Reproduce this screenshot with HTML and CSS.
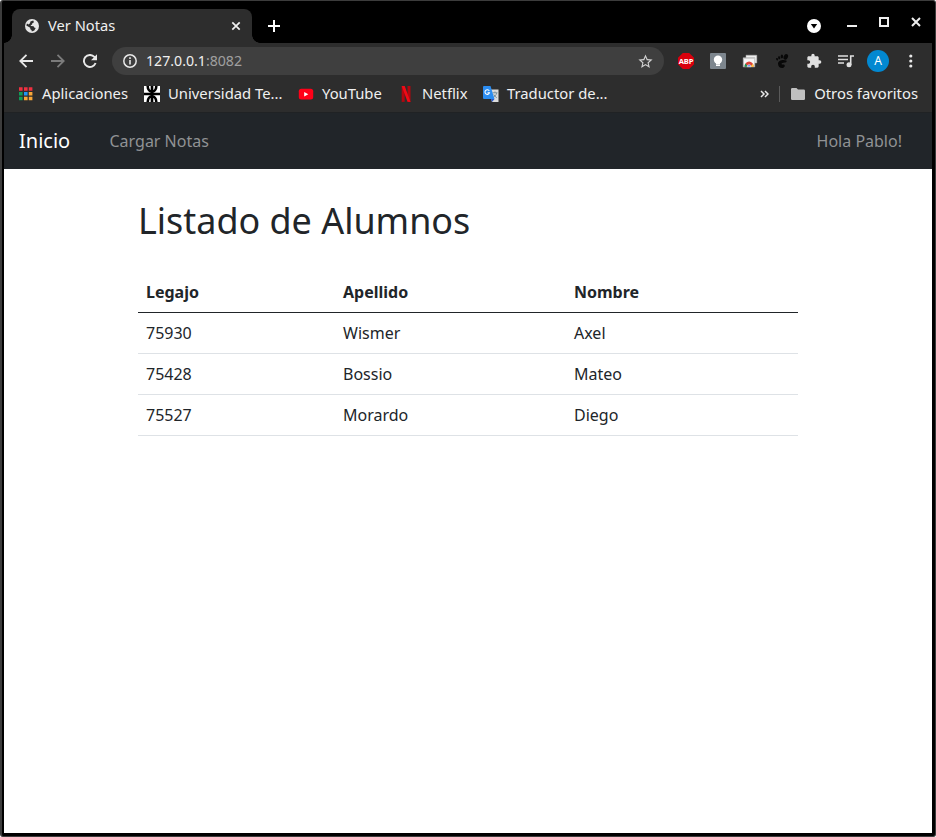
FILE: index.html
```html
<!DOCTYPE html>
<html lang="es">
<head>
<meta charset="utf-8">
<title>Ver Notas</title>
<link rel="stylesheet" href="styles.css">
</head>
<body>
<div class="window">
  <div class="tabstrip">
    <div class="tab">
      <svg class="globe" width="14" height="14" viewBox="0 0 14 14"><circle cx="7" cy="7" r="7" fill="#e6e6e6"/><path d="M8.200 1.500 9 3.200 7.300 4.300 7.100 5.500 5.600 6.200 6 7.100 8.600 7.300 9.200 8.600 10.700 9 9.300 11.500 6.800 12.600 6.500 11 5.300 10.200 5.200 8.700 1.300 6.600 2 4.400 3.500 5.500 5 4.200 5.400 2.600z" fill="#2d2d2d"/></svg>
      <span class="tab-title">Ver Notas</span>
      <svg width="10" height="10" viewBox="0 0 10 10"><path d="M1.3 1.3 8.7 8.7M8.7 1.3 1.3 8.7" stroke="#eee" stroke-width="1.7"/></svg>
    </div>
    <svg class="newtab" width="12" height="12" viewBox="0 0 12 12"><path d="M6 0v12M0 6h12" stroke="#fff" stroke-width="2"/></svg>
    <div class="controls">
      <svg class="search" width="14" height="14" viewBox="0 0 14 14"><circle cx="7" cy="7" r="7" fill="#fff"/><path d="M3.800 5h6.400L7 9.400z" fill="#000"/></svg>
      <svg class="min" width="10" height="10" viewBox="0 0 10 10"><path d="M0 9h10" stroke="#eee" stroke-width="2"/></svg>
      <svg class="max" width="10" height="10" viewBox="0 0 10 10"><path d="M1 1h8v8H1z" fill="none" stroke="#eee" stroke-width="2"/></svg>
      <svg class="close" width="10" height="10" viewBox="0 0 10 10"><path d="M1 1 9 9M9 1 1 9" stroke="#eee" stroke-width="2"/></svg>
    </div>
  </div>

  <div class="toolbar">
    <div class="cell"><svg width="14" height="14" viewBox="0 0 14 14"><path d="M14 7H1.5M7.5.8 1.3 7l6.2 6.2" fill="none" stroke="#e8e8e8" stroke-width="1.8"/></svg></div>
    <div class="cell"><svg width="14" height="14" viewBox="0 0 14 14"><path d="M0 7h12.5M6.5.8 12.7 7l-6.2 6.2" fill="none" stroke="#7b7b7b" stroke-width="1.8"/></svg></div>
    <div class="cell"><svg width="14" height="14" viewBox="0 0 14 14"><path d="M12.6 9A6 6 0 1 1 11.4 2.9L12.8 4.4" fill="none" stroke="#e8e8e8" stroke-width="1.9"/><path d="M14 .2V6.2H8z" fill="#e8e8e8"/></svg></div>
    <div class="omnibox">
      <svg width="14" height="14" viewBox="0 0 14 14"><circle cx="7" cy="7" r="6.2" fill="none" stroke="#e8e8e8" stroke-width="1.5"/><path d="M7 6v4.6M7 3.3v1.6" stroke="#e8e8e8" stroke-width="1.6"/></svg>
      <span class="url">127.0.0.1<span class="port">:8082</span></span>
      <svg width="17" height="17" viewBox="0 0 24 24"><path d="M22 9.24l-7.19-.62L12 2 9.19 8.63 2 9.24l5.46 4.73L5.82 21 12 17.27 18.18 21l-1.63-7.03L22 9.24zM12 15.4l-3.76 2.27 1-4.28-3.32-2.88 4.38-.38L12 6.1l1.71 4.04 4.38.38-3.32 2.88 1 4.28L12 15.4z" fill="#d0d0d0"/></svg>
    </div>
    <div class="extensions">
      <div class="cell"><div class="abp">ABP</div></div>
      <div class="cell"><svg width="16" height="16" viewBox="0 0 16 16"><rect width="16" height="16" rx="1" fill="#7d868e"/><circle cx="8" cy="6.800" r="4.200" fill="#fff"/><path d="M6 10h4v3H6z" fill="#fff"/><path d="M6 11.500h4" stroke="#b5babf" stroke-width=".6"/></svg></div>
      <div class="cell"><svg width="16" height="16" viewBox="0 0 16 16"><path d="M4 2.200H14.800V10H4z" fill="#eee" stroke="#aaa" stroke-width=".5"/><path d="M1.200 4.700H12.800V14H1.200z" fill="#f7f7f7" stroke="#999" stroke-width=".6"/><path d="M1.500 5.600h11" stroke="#c9c9c9"/><path d="M2.500 13.700a4.600 5.200 0 0 1 9.200 0z" fill="#db4437"/><path d="M2.500 13.700a4.600 5.200 0 0 1 1-3.200l2.500 3.200z" fill="#0f9d58"/><path d="M11.700 13.700a4.600 5.200 0 0 0-.8-2.900l-2.400 2.900z" fill="#ffcd40"/><path d="M5.200 13.700a1.900 2 0 0 1 3.800 0z" fill="#4285f4" stroke="#fff" stroke-width=".6"/></svg></div>
      <div class="cell"><svg width="14" height="16" viewBox="0 0 14 16"><g fill="#080808"><ellipse cx="10.800" cy="3.800" rx="2.100" ry="2.900" transform="rotate(25 10.800 3.800)"/><ellipse cx="6.900" cy="3.500" rx="1.200" ry="1.900"/><ellipse cx="4.200" cy="4.700" rx="1.100" ry="1.500" transform="rotate(-15 4.200 4.700)"/><ellipse cx="2.100" cy="6.200" rx="1" ry="1.300" transform="rotate(-25 2.100 6.200)"/><path d="M11.300 7.500C8 6 2.800 7.600 3 10.700 3.100 13.500 5.300 15.400 7.700 15c2.200-.4 2.900-3 1-3.500-1-.2-1.400.2-2-.2-.5-.6.400-1.300 1.600-1.500C10 9.600 12.600 9.200 11.300 7.500z"/></g></svg></div>
      <div class="cell"><svg width="16" height="16" viewBox="0 0 24 24"><path d="M20.5 11H19V7c0-1.1-.9-2-2-2h-4V3.500a2.500 2.500 0 0 0-5 0V5H4c-1.100 0-1.990.9-1.990 2v3.800H3.500c1.490 0 2.700 1.210 2.700 2.700s-1.210 2.700-2.700 2.700H2V20c0 1.100.9 2 2 2h3.800v-1.500c0-1.490 1.210-2.700 2.700-2.700s2.700 1.210 2.700 2.700V22H17c1.100 0 2-.9 2-2v-4h1.500a2.500 2.500 0 0 0 0-5z" fill="#e0e0e0"/></svg></div>
      <div class="cell"><svg width="16" height="14" viewBox="0 0 16 14"><path d="M0 2h10M0 5.500h10M0 9h6M12.700 11V2H16" fill="none" stroke="#e0e0e0" stroke-width="1.600"/><circle cx="11" cy="10.800" r="2.500" fill="#e0e0e0"/></svg></div>
      <div class="cell"><div class="avatar">A</div></div>
      <div class="cell"><svg width="5" height="14" viewBox="0 0 5 14"><g fill="#e8e8e8"><circle cx="2.800" cy="2" r="1.600"/><circle cx="2.800" cy="7" r="1.600"/><circle cx="2.800" cy="12" r="1.600"/></g></svg></div>
    </div>
  </div>

  <div class="bookmarks">
    <div class="bm apps"><svg width="16" height="16" viewBox="0 0 16 16"><path d="M1 1.300h3.600v3.400H1zM6 1.300h3.600v3.400H6zM10.800 1.300h3.600v3.400h-3.600z" fill="#f03040"/><path d="M1 6h3.600v3.400H1zM1 10.800h3.600v3.400H1z" fill="#0f9d58"/><path d="M6 6h3.600v3.400H6z" fill="#2196f3"/><path d="M10.800 6h3.600v3.400h-3.600zM6 10.800h3.600v3.400H6zM10.800 10.800h3.600v3.400h-3.600z" fill="#f9a737"/></svg><span>Aplicaciones</span></div>
    <div class="bm utn"><svg width="16" height="16" viewBox="0 0 16 16"><path d="M0 0h16v16H0z" fill="#fff"/><path d="M8 0v16M0 8h16" stroke="#000" stroke-width="2.600"/><path d="M3.700 0C3.700 7.500 12.300 7.500 12.300 0M3.700 16C3.700 8.500 12.300 8.500 12.300 16" fill="none" stroke="#000" stroke-width="2.600"/></svg><span>Universidad Te...</span></div>
    <div class="bm yt"><svg width="16" height="16" viewBox="0 0 16 16"><rect x=".8" y="2.800" width="14.400" height="10.600" rx="2.500" fill="#ff0018"/><path d="M6.200 5.900v4.600L10.300 8.200z" fill="#fff"/></svg><span>YouTube</span></div>
    <div class="bm nf"><svg width="16" height="16" viewBox="0 0 16 16"><path d="M3.700 0h3v15.700l-3 .3zM9.500 0h3v16l-3-.3z" fill="#b2070f"/><path d="M3.700 0h3l5.800 16-3-.3z" fill="#f00a16"/></svg><span>Netflix</span></div>
    <div class="bm gt"><svg width="16" height="16" viewBox="0 0 16 16"><path d="M6 3.500h9.500V16H9z" fill="#dcdcdc"/><path d="M9.500 6.800h5M12 5.500v1.300M13.700 7c-.4 2-2 3.600-3.500 4.600M10.800 8.500c.7 1.400 1.800 2.500 3 3.300" stroke="#78909c" fill="none"/><path d="M8 13h3.500L9 16z" fill="#2a56c6"/><path d="M1 0h6.500L11.500 13H1a1 1 0 0 1-1-1V1a1 1 0 0 1 1-1z" fill="#2b8df2"/><path d="M6.300 4.900A2.300 2.300 0 1 0 6.500 6.700H4.500" fill="none" stroke="#fff" stroke-width="1.100"/></svg><span>Traductor de...</span></div>
    <div class="others">
      <svg class="more" width="9" height="8" viewBox="0 0 9 8"><path d="M1 1l3 3-3 3M5 1l3 3-3 3" fill="none" stroke="#e8e8e8" stroke-width="1.500"/></svg>
      <svg class="folder" width="14" height="12" viewBox="0 0 14 12"><path d="M1.300 0H5.500L7 1.500h5.700A1.300 1.300 0 0 1 14 2.800v7.900A1.300 1.300 0 0 1 12.700 12H1.300A1.300 1.300 0 0 1 0 10.700V1.300A1.300 1.300 0 0 1 1.300 0z" fill="#c0c0c0"/></svg>
      <span>Otros favoritos</span>
    </div>
  </div>

  <nav class="navbar">
    <a class="brand">Inicio</a>
    <a class="link">Cargar Notas</a>
    <span class="hello">Hola Pablo!</span>
  </nav>

  <main class="container">
    <h1>Listado de Alumnos</h1>
    <table>
      <colgroup><col class="c1"><col class="c2"><col class="c3"></colgroup>
      <thead><tr><th>Legajo</th><th>Apellido</th><th>Nombre</th></tr></thead>
      <tbody>
        <tr><td>75930</td><td>Wismer</td><td>Axel</td></tr>
        <tr><td>75428</td><td>Bossio</td><td>Mateo</td></tr>
        <tr><td>75527</td><td>Morardo</td><td>Diego</td></tr>
      </tbody>
    </table>
  </main>
</div>
</body>
</html>
```
FILE: styles.css
```css
* { box-sizing: border-box; }
html { background: #fff; }
body { margin: 0; font-family: "Noto Sans", sans-serif; }
svg { display: block; flex: none; }
.window {
  width: 936px;
  height: 837px;
  padding: 1px 3px 3px 2px;
  border: solid #3c3c3c;
  border-width: 1px 1px 1px 2px;
  border-radius: 3px;
  background: #000;
  overflow: hidden;
}
.tabstrip { display: flex; height: 41px; padding-left: 8px; }
.tab {
  position: relative;
  display: flex;
  align-items: center;
  width: 240px;
  height: 34px;
  margin-top: 7px;
  padding: 0 11px 0 13px;
  border-radius: 8px 8px 0 0;
  background: #2d2d2d;
  color: #f0f0f0;
  font-size: 14.67px;
}
.tab::before, .tab::after {
  content: "";
  position: absolute;
  bottom: 0;
  width: 8px;
  height: 8px;
}
.tab::before { left: -8px; background: radial-gradient(circle at 0 0, #000 7.5px, #2d2d2d 8px); }
.tab::after { right: -8px; background: radial-gradient(circle at 100% 0, #000 7.5px, #2d2d2d 8px); }
.tab-title { flex: 1; margin-left: 9px; padding-bottom: 2px; }
.newtab { margin: 18px 0 0 16px; }
.controls { display: flex; margin-left: auto; padding-right: 11px; }
.search { margin-top: 17px; }
.min { margin: 15px 0 0 26px; }
.max { margin: 15px 0 0 22px; }
.close { margin: 15px 0 0 22px; }
.toolbar {
  display: flex;
  align-items: center;
  height: 36px;
  padding-left: 6px;
  background: #2d2d2d;
}
.cell { display: flex; align-items: center; justify-content: center; width: 32px; height: 32px; }
.omnibox {
  display: flex;
  align-items: center;
  width: 552px;
  height: 28px;
  margin-left: 6px;
  padding: 0 10px 0 11px;
  border-radius: 14px;
  background: #3f3f3f;
}
.url { flex: 1; margin-left: 9px; padding-bottom: 2px; color: #f0f0f0; font-size: 14.15px; }
.port { color: #a0a0a0; }
.extensions { display: flex; margin-left: 6px; }
.abp {
  display: flex;
  justify-content: center;
  width: 16px;
  height: 16px;
  background: #d9000d;
  clip-path: polygon(30% 0, 70% 0, 100% 30%, 100% 70%, 70% 100%, 30% 100%, 0 70%, 0 30%);
  color: #fff;
  font: bold 7.6px/16px "Noto Sans", sans-serif;
  letter-spacing: -0.2px;
}
.avatar {
  width: 22px;
  height: 22px;
  border-radius: 50%;
  background: #0288d1;
  color: #fff;
  font-size: 12px;
  line-height: 22px;
  text-align: center;
}
.bookmarks {
  display: flex;
  align-items: center;
  height: 34px;
  padding: 0 14px 3px;
  border-bottom: 1px solid #202224;
  background: #2d2d2d;
  color: #f0f0f0;
  font-size: 14.8px;
}
.bm { display: flex; align-items: center; gap: 8px; white-space: nowrap; }
.bm span, .others span { padding-bottom: 2px; }
.apps { width: 126px; }
.utn { width: 154px; }
.yt { width: 100px; }
.nf { width: 85px; }
.others { display: flex; align-items: center; margin-left: auto; white-space: nowrap; }
.more { margin-right: 10px; }
.folder { box-sizing: content-box; padding: 2px 0 2px 11px; border-left: 1px solid #5a5a5a; margin-right: 9px; }
.navbar {
  display: flex;
  align-items: center;
  height: 56px;
  padding: 0 30px 1px 15px;
  background: #212529;
}
.brand { width: 90.5px; color: #fff; font-size: 20px; }
.link, .hello { color: #909294; font-size: 16px; }
.hello { margin-left: auto; }
.container {
  height: 664px;
  padding: 30px 134px 0;
  background: #fff;
  color: #212529;
}
h1 { margin: 0 0 30px; font-size: 35.92px; font-weight: 400; line-height: 43px; }
table { width: 660px; table-layout: fixed; border-collapse: collapse; font-size: 16px; line-height: 24px; }
.c1 { width: 197px; }
.c2 { width: 231px; }
.c3 { width: 232px; }
th, td { padding: 8px; text-align: left; border-bottom: 1px solid #dee2e6; }
th { border-bottom-color: #212529; }
```
